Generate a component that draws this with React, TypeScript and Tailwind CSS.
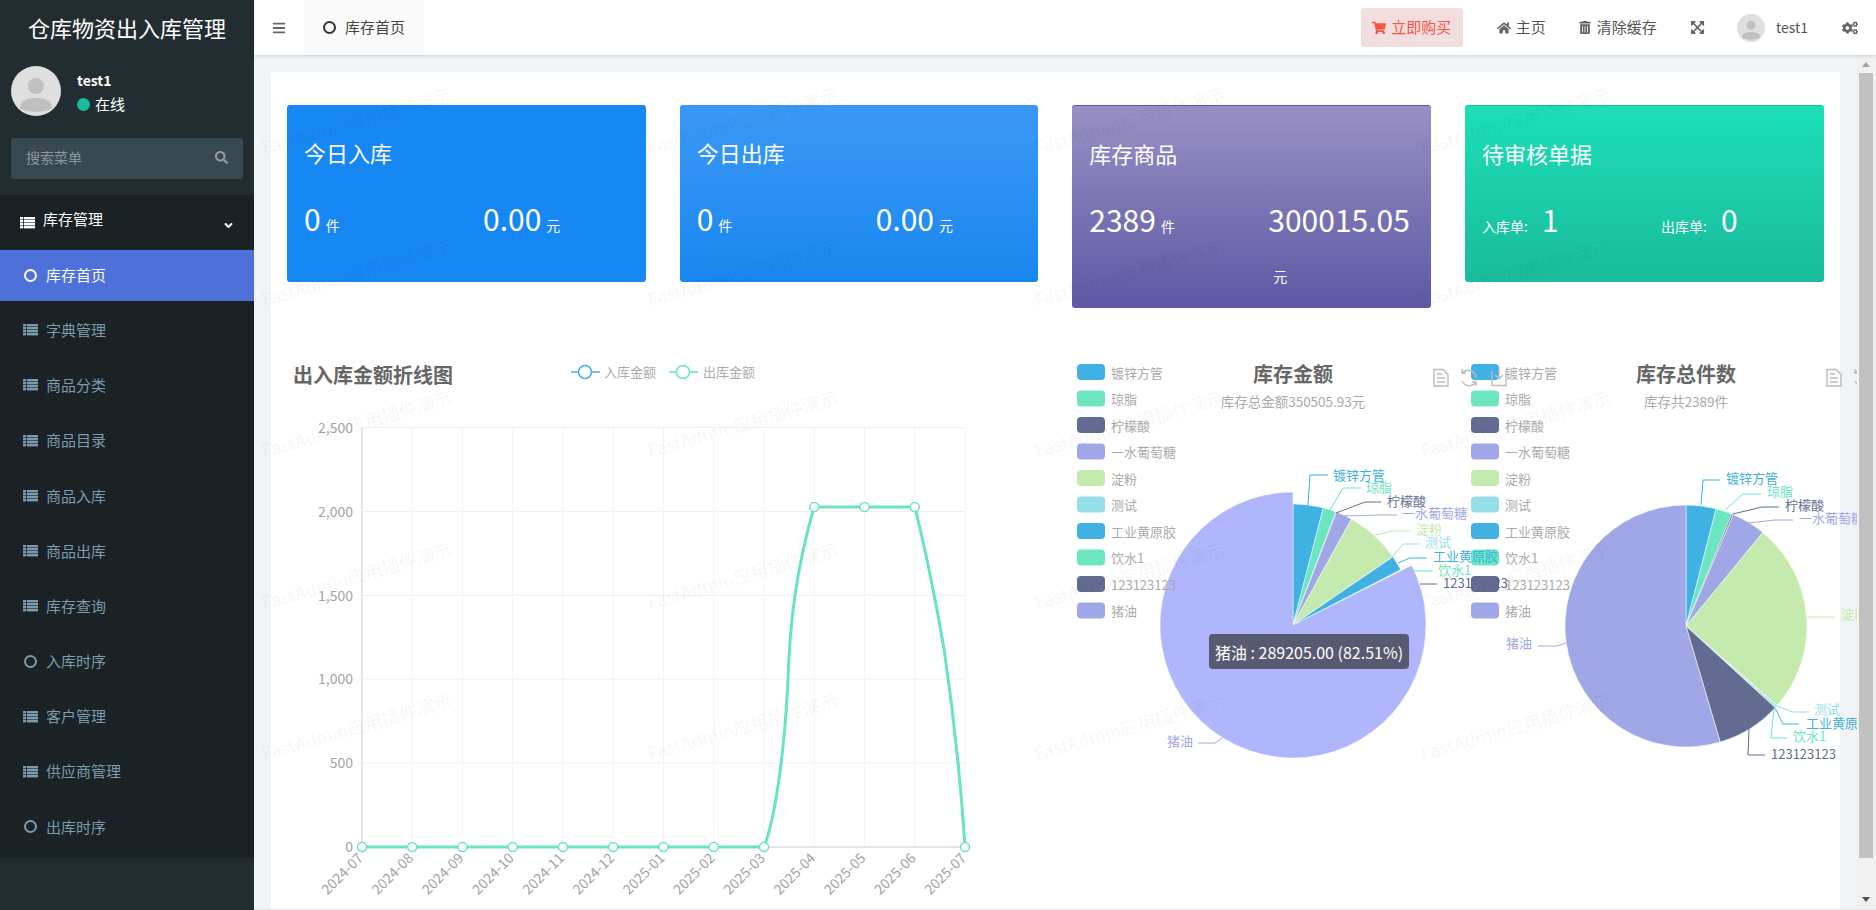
import React from 'react';
import { FaBars, FaCogs, FaExpandArrowsAlt, FaHome, FaSearch, FaShoppingCart, FaTrashAlt, FaAngleDown } from 'react-icons/fa';

const BLUE = '#3fb1e3';
const MINT = '#6be6c1';
const SLATE = '#626c91';
const LILAC = '#a0a7e6';
const LIME = '#c4ebad';
const AQUA = '#96dee8';

const menuItems = [
  { label: '字典管理', icon: 'list' },
  { label: '商品分类', icon: 'list' },
  { label: '商品目录', icon: 'list' },
  { label: '商品入库', icon: 'list' },
  { label: '商品出库', icon: 'list' },
  { label: '库存查询', icon: 'list' },
  { label: '入库时序', icon: 'ring' },
  { label: '客户管理', icon: 'list' },
  { label: '供应商管理', icon: 'list' },
  { label: '出库时序', icon: 'ring' },
];

const legendItems = [
  { name: '镀锌方管', color: BLUE, y: 371 },
  { name: '琼脂', color: MINT, y: 397.5 },
  { name: '柠檬酸', color: SLATE, y: 424 },
  { name: '一水葡萄糖', color: LILAC, y: 450.5 },
  { name: '淀粉', color: LIME, y: 477 },
  { name: '测试', color: AQUA, y: 503.5 },
  { name: '工业黄原胶', color: BLUE, y: 530 },
  { name: '饮水1', color: MINT, y: 556.5 },
  { name: '123123123', color: SLATE, y: 583 },
  { name: '猪油', color: LILAC, y: 609.5 },
];

type Slice = { from: number; to: number; color: string; r?: number };
type PieLabel = { text: string; color: string; line: string; x: number; y: number; end?: boolean };

const amountSlices: Slice[] = [
  { from: 0, to: 14.5, color: BLUE },
  { from: 14.5, to: 20.8, color: MINT },
  { from: 20.8, to: 21.1, color: SLATE },
  { from: 21.1, to: 28.9, color: LILAC },
  { from: 28.9, to: 55.6, color: LIME },
  { from: 55.6, to: 55.7, color: AQUA },
  { from: 55.7, to: 62.8, color: BLUE },
  { from: 63.3, to: 360, color: '#afb6fc', r: 133 },
];

const countSlices: Slice[] = [
  { from: 0, to: 14.4, color: BLUE },
  { from: 14.4, to: 22.2, color: MINT },
  { from: 22.2, to: 23, color: SLATE },
  { from: 23, to: 39.4, color: LILAC },
  { from: 39.4, to: 131.1, color: LIME },
  { from: 131.1, to: 131.5, color: AQUA },
  { from: 131.5, to: 132, color: BLUE },
  { from: 132, to: 132.5, color: MINT },
  { from: 132.5, to: 163.6, color: SLATE },
  { from: 163.6, to: 360, color: LILAC },
];

const amountLabels: PieLabel[] = [
  { text: '镀锌方管', color: BLUE, line: '1308,504 1310,474 1328,474', x: 1333, y: 473 },
  { text: '琼脂', color: MINT, line: '1330,509 1343,487 1361,487', x: 1366, y: 485.5 },
  { text: '柠檬酸', color: SLATE, line: '1336,512 1365,501 1381,501', x: 1387, y: 499.5 },
  { text: '一水葡萄糖', color: LILAC, line: '1343,515 1380,514 1397,514', x: 1402, y: 511.5 },
  { text: '淀粉', color: LIME, line: '1375,534 1393,530 1411,530', x: 1416, y: 527.5 },
  { text: '测试', color: AQUA, line: '1392,556 1403,543 1420,543', x: 1425, y: 540.5 },
  { text: '工业黄原胶', color: BLUE, line: '1398,562 1410,557 1427,557', x: 1433, y: 554.5 },
  { text: '饮水1', color: MINT, line: '1413,570 1433,570', x: 1438, y: 568.5 },
  { text: '123123123', color: SLATE, line: '1420,583 1437,583', x: 1443, y: 581 },
  { text: '猪油', color: LILAC, line: '1222,737 1215,742 1198,742', x: 1193, y: 739.5, end: true },
];

const countLabels: PieLabel[] = [
  { text: '镀锌方管', color: BLUE, line: '1701,504 1703,479 1720,479', x: 1726, y: 476.5 },
  { text: '琼脂', color: MINT, line: '1725,509 1743,493 1761,493', x: 1767, y: 489.5 },
  { text: '柠檬酸', color: SLATE, line: '1733,513 1762,506 1779,506', x: 1785, y: 503.5 },
  { text: '一水葡萄糖', color: LILAC, line: '1748,522 1775,519 1793,519', x: 1799, y: 516.5 },
  { text: '淀粉', color: LIME, line: '1807,616 1835,616', x: 1841, y: 612.5 },
  { text: '测试', color: AQUA, line: '1777,705 1793,711 1809,711', x: 1814, y: 707.5 },
  { text: '工业黄原胶', color: BLUE, line: '1775,707 1783,723 1799,723', x: 1806, y: 721.5 },
  { text: '饮水1', color: MINT, line: '1774,707 1771,737 1787,737', x: 1793, y: 734.5 },
  { text: '123123123', color: SLATE, line: '1749,728 1748,754 1765,754', x: 1771, y: 752 },
  { text: '猪油', color: LILAC, line: '1566,642 1557,645 1538,645', x: 1532, y: 641.5, end: true },
];

const months = ['2024-07', '2024-08', '2024-09', '2024-10', '2024-11', '2024-12', '2025-01', '2025-02', '2025-03', '2025-04', '2025-05', '2025-06', '2025-07'];
const chartLeft = 362;
const monthStep = 50.25;
const yTicks = [
  { label: '2,500', y: 426.5 },
  { label: '2,000', y: 510.5 },
  { label: '1,500', y: 594.5 },
  { label: '1,000', y: 678 },
  { label: '500', y: 762 },
  { label: '0', y: 846 },
];

function arcPath(cx: number, cy: number, r: number, from: number, to: number) {
  const rad = (d: number) => (d * Math.PI) / 180;
  const x0 = cx + r * Math.sin(rad(from));
  const y0 = cy - r * Math.cos(rad(from));
  const x1 = cx + r * Math.sin(rad(to));
  const y1 = cy - r * Math.cos(rad(to));
  const large = to - from > 180 ? 1 : 0;
  return `M${cx},${cy} L${x0},${y0} A${r},${r} 0 ${large} 1 ${x1},${y1} Z`;
}

function Ring({ className }: { className: string }) {
  return <span className={`inline-block h-[13px] w-[13px] shrink-0 rounded-full border-2 ${className}`} />;
}

// fa-list at this size reads as a striped block
function ListIcon({ className }: { className: string }) {
  return (
    <svg viewBox="0 0 15 12" className={`h-[12px] w-[15px] shrink-0 ${className}`} fill="currentColor">
      {[0, 3, 6, 9].map((y) => (
        <g key={y}>
          <rect x="0" y={y} width="3" height="2.4" />
          <rect x="3.8" y={y} width="11.2" height="2.4" />
        </g>
      ))}
    </svg>
  );
}

function Avatar({ size }: { size: string }) {
  return (
    <svg viewBox="0 0 50 50" className={`${size} shrink-0`}>
      <circle cx="25" cy="25" r="25" fill="#dfdfdf" />
      <circle cx="25" cy="20" r="8" fill="#c0c0c0" />
      <path d="M9 42 C9 34 17 32 25 32 C33 32 41 34 41 42 C36 47 14 47 9 42 Z" fill="#c0c0c0" />
    </svg>
  );
}

function Sidebar() {
  return (
    <aside className="flex h-full w-[254px] shrink-0 flex-col bg-[#222d32]">
      <div className="flex h-[55px] items-center justify-center pb-[1px] text-[22px] text-white">仓库物资出入库管理</div>
      <div className="flex px-[11px] pb-[22px] pt-[11px]">
        <Avatar size="h-[50px] w-[50px]" />
        <div className="ml-[16px] pt-[2px] text-white">
          <div className="h-[24px] text-[14px] font-bold leading-[24px]">test1</div>
          <div className="flex h-[24px] items-center text-[15px]">
            <span className="mr-[5px] h-[13px] w-[13px] rounded-full bg-[#18bc9c]" />
            在线
          </div>
        </div>
      </div>
      <div className="mx-[11px] flex h-[41px] items-center justify-between rounded-[3px] bg-[#374850] pb-[2px] pl-[15px] pr-[15px] text-[14px] text-[#8c979c]">
        <span>搜索菜单</span>
        <FaSearch className="h-[13px] w-[13px] text-[#999999]" />
      </div>
      <nav className="mt-[16px] bg-[#1a2226] pb-[5px]">
        <div className="flex h-[55px] items-center pl-[20px] pr-[19px] text-[15px] text-white">
          <ListIcon className="text-white" />
          <span className="ml-[8px] flex-1 pb-[6px]">库存管理</span>
          <FaAngleDown className="mt-[5px] h-[13px] w-[13px]" />
        </div>
        <div className="flex flex-col gap-[4.2px]">
          <a className="flex h-[51px] items-center bg-[#4e70d9] pb-[1px] pl-[24px] text-[15px] text-white">
            <Ring className="border-white" />
            <span className="ml-[9px]">库存首页</span>
          </a>
          {menuItems.map((item) => (
            <a key={item.label} className="flex h-[51px] items-center pb-[1px] pl-[23px] text-[15px] text-[#7b9cae]">
              {item.icon === 'list' ? (
                <ListIcon className="text-[#7b9cae]" />
              ) : (
                <span className="ml-[1px] mr-[1px] flex">
                  <Ring className="border-[#7b9cae]" />
                </span>
              )}
              <span className="ml-[8px]">{item.label}</span>
            </a>
          ))}
        </div>
      </nav>
    </aside>
  );
}

function Header() {
  return (
    <header className="relative z-10 flex h-[55px] shrink-0 items-center bg-white text-[15px] text-[#555555] shadow-[0_1px_3px_rgba(0,0,0,0.15)]">
      <FaBars className="ml-[18px] h-[14px] w-[14px] text-[#666666]" />
      <div className="ml-[18px] flex h-full w-[120px] items-center bg-[#f9f9f9] pl-[19px] text-[#444444]">
        <Ring className="border-[#333333]" />
        <span className="ml-[9px]">库存首页</span>
      </div>
      <a className="ml-auto flex h-[39px] w-[102px] items-center justify-center rounded-[3px] bg-[#f2dede] text-[#f75444]">
        <FaShoppingCart className="mr-[5px] h-[14px] w-[14px]" />
        立即购买
      </a>
      <FaHome className="ml-[34px] h-[14px] w-[14px] text-[#666666]" />
      <span className="ml-[5px]">主页</span>
      <FaTrashAlt className="ml-[33px] h-[13px] w-[12px] text-[#666666]" />
      <span className="ml-[6px]">清除缓存</span>
      <FaExpandArrowsAlt className="ml-[33px] h-[15px] w-[15px] text-[#666666]" />
      <span className="ml-[32px] flex">
        <Avatar size="h-[28px] w-[28px]" />
      </span>
      <span className="ml-[11px] text-[14px]">test1</span>
      <FaCogs className="ml-[34px] mr-[18px] h-[14px] w-[16px] text-[#666666]" />
    </header>
  );
}

function Stat({ value, unit, label }: { value: string; unit?: string; label?: string }) {
  return (
    <div className="flex flex-wrap items-baseline">
      {label && <span className="w-[60px] text-[14px]">{label}</span>}
      <span className="h-[56px] text-[30px] leading-[56px]">{value}</span>
      {unit && <span className="ml-[5px] mt-[19px] text-[14px] leading-[20px]">{unit}</span>}
    </div>
  );
}

function StatCard({ title, className, left, right }: { title: string; className: string; left: React.ReactNode; right: React.ReactNode }) {
  return (
    <div className={`min-h-[177px] w-[358.67px] shrink-0 rounded-[3px] px-[17px] pb-[22px] pt-[31px] text-white ${className}`}>
      <h3 className="h-[32px] text-[22px] leading-[32px]">{title}</h3>
      <div className="mt-[22px] grid grid-cols-[179px_1fr]">
        {left}
        {right}
      </div>
    </div>
  );
}

function LineChart() {
  return (
    <svg viewBox="287 350 789 560" className="h-[560px] w-[789px] shrink-0 overflow-visible">
      <text x="293" y="373" fontSize="20" fontWeight="700" fill="#666666" dominantBaseline="central">出入库金额折线图</text>
      <line x1="571" y1="371" x2="600" y2="371" stroke={BLUE} strokeWidth="1.5" />
      <circle cx="585" cy="371" r="6.5" fill="#ffffff" stroke={BLUE} strokeWidth="1.5" />
      <text x="604" y="370" fontSize="13" fill="#aaaaaa" dominantBaseline="central">入库金额</text>
      <line x1="669" y1="371" x2="698" y2="371" stroke={MINT} strokeWidth="1.5" />
      <circle cx="683" cy="371" r="6.5" fill="#ffffff" stroke={MINT} strokeWidth="1.5" />
      <text x="703" y="370" fontSize="13" fill="#aaaaaa" dominantBaseline="central">出库金额</text>

      {yTicks.slice(0, 5).map((t) => (
        <line key={t.label} x1={chartLeft} y1={t.y} x2="965" y2={t.y} stroke="#f0f0f0" />
      ))}
      {months.slice(1).map((m, i) => (
        <line key={m + i} x1={chartLeft + (i + 1) * monthStep} y1="427" x2={chartLeft + (i + 1) * monthStep} y2="846" stroke="#f3f3f3" />
      ))}
      <line x1={chartLeft} y1="427" x2={chartLeft} y2="846" stroke="#cccccc" />
      <line x1={chartLeft} y1="846" x2="965" y2="846" stroke="#cccccc" />
      {yTicks.map((t) => (
        <text key={t.label} x="353" y={t.y - 1} fontSize="14" fill="#a3a3a3" textAnchor="end" dominantBaseline="central">{t.label}</text>
      ))}
      {months.map((m, i) => {
        const x = chartLeft + i * monthStep + 2;
        return (
          <text key={m + i} x={x} y="858" fontSize="14" fill="#a3a3a3" textAnchor="end" transform={`rotate(-45 ${x} 858)`}>{m}</text>
        );
      })}
      <path
        d="M362,846 H764 C776,815 785,745 788,678 C790,620 796,570 814,506 H915 C925,548 936,600 944,648 C951,695 960,770 965,846"
        fill="none"
        stroke="#69e3c3"
        strokeWidth="3"
      />
      {months.map((m, i) => {
        const up = i >= 9 && i <= 11;
        return <circle key={m + i} cx={chartLeft + i * monthStep} cy={up ? 506 : 846} r="4.5" fill="#ffffff" stroke={MINT} strokeWidth="1.5" />;
      })}
    </svg>
  );
}

function ToolIcons({ x }: { x: number }) {
  return (
    <g fill="none" stroke="#bbbbbb" strokeWidth="1.4">
      <path d={`M${x},368.5 h9 l5,5 v11.5 h-14 z M${x + 3},373 h5 M${x + 3},377 h8 M${x + 3},381 h8`} />
      <path d={`M${x + 28},372 a8,8 0 0 1 14,5 M${x + 42},381 a8,8 0 0 1 -14,-1 M${x + 28},368 v4 h4 M${x + 42},385 v-4 h-4`} />
      <path d={`M${x + 58},370 v14.5 h14 v-14.5 M${x + 65},368 v10 M${x + 61},374 l4,4 l4,-4`} />
    </g>
  );
}

function PieChart({
  left,
  width,
  cx,
  cy,
  slices,
  labels,
  title,
  sub,
  titleX,
  toolX,
}: {
  left: number;
  width: number;
  cx: number;
  cy: number;
  slices: Slice[];
  labels: PieLabel[];
  title: string;
  sub: string;
  titleX: number;
  toolX: number;
}) {
  return (
    <svg viewBox={`${left} 350 ${width} 560`} style={{ width }} className="h-[560px] shrink-0 overflow-visible">
      <text x={titleX} y="372.5" fontSize="20" fontWeight="700" fill="#666666" textAnchor="middle" dominantBaseline="central">{title}</text>
      <text x={titleX} y="400" fontSize="13.5" fill="#aaaaaa" textAnchor="middle" dominantBaseline="central">{sub}</text>
      <ToolIcons x={toolX} />
      {slices.map((s) => (
        <path key={s.from} d={arcPath(cx, cy, s.r ?? 121, s.from, s.to)} fill={s.color} stroke="#ffffff" strokeWidth="0.5" />
      ))}
      {labels.map((l) => (
        <g key={l.text}>
          <polyline points={l.line} fill="none" stroke={l.color} />
          <text x={l.x} y={l.y} fontSize="13" fill={l.color} textAnchor={l.end ? 'end' : 'start'} dominantBaseline="central">{l.text}</text>
        </g>
      ))}
      {legendItems.map((item) => (
        <g key={item.name}>
          <rect x={left + 1} y={item.y - 8} width="28" height="16" rx="4" fill={item.color} />
          <text x={left + 35} y={item.y} fontSize="13" fill="#aaaaaa" dominantBaseline="central">{item.name}</text>
        </g>
      ))}
    </svg>
  );
}

function Watermark() {
  const cells = Array.from({ length: 20 }, (_, i) => i);
  return (
    <div className="pointer-events-none absolute left-[-91px] top-[-10px] z-20 grid grid-cols-[repeat(4,386.5px)] grid-rows-[repeat(5,151.5px)]">
      {cells.map((i) => (
        <div key={i} className="flex items-center justify-center">
          <span className="-rotate-[16deg] whitespace-nowrap text-[18px] text-black/[0.05]">FastAdmin应用插件演示</span>
        </div>
      ))}
    </div>
  );
}

export default function App() {
  return (
    <div className="flex h-[910px] w-[1876px] overflow-hidden font-['Noto_Sans_CJK_SC','Open_Sans',sans-serif]">
      <Sidebar />
      <div className="flex min-w-0 flex-1 flex-col">
        <Header />
        <div className="flex min-h-0 flex-1 border-b border-[#e6e6e6]">
          <main className="relative min-w-0 flex-1 overflow-hidden bg-[#f1f4f6] pl-[17px] pr-[17px] pt-[17px]">
            <div className="h-full w-[1569px] rounded-t-[3px] bg-white">
              <div className="flex items-start gap-[34px] px-[16px] pt-[33px]">
                <StatCard
                  title="今日入库"
                  className="bg-[#1787f3]"
                  left={<Stat value="0" unit="件" />}
                  right={<Stat value="0.00" unit="元" />}
                />
                <StatCard
                  title="今日出库"
                  className="bg-gradient-to-b from-[#3a98f5] to-[#1787f0]"
                  left={<Stat value="0" unit="件" />}
                  right={<Stat value="0.00" unit="元" />}
                />
                <StatCard
                  title="库存商品"
                  className="border-t border-[#5f58a6] bg-gradient-to-b from-[#9890c4] to-[#5e58a5]"
                  left={<Stat value="2389" unit="件" />}
                  right={<Stat value="300015.05" unit="元" />}
                />
                <StatCard
                  title="待审核单据"
                  className="border-t border-[#18bc9c] bg-gradient-to-b from-[#1cdfb7] to-[#19bb9b]"
                  left={<Stat label="入库单:" value="1" />}
                  right={<Stat label="出库单:" value="0" />}
                />
              </div>
              <div className="mt-[43px] flex pl-[16px]">
                <LineChart />
                <div className="relative shrink-0">
                  <PieChart
                    left={1076}
                    width={394}
                    cx={1293}
                    cy={624}
                    slices={amountSlices}
                    labels={amountLabels}
                    title="库存金额"
                    sub="库存总金额350505.93元"
                    titleX={1293}
                    toolX={1434}
                  />
                  <div className="absolute left-[133px] top-[283px] flex h-[35px] w-[200px] items-center justify-center whitespace-nowrap rounded-[4px] bg-[#585a72] text-[16px] text-white">
                    猪油 : 289205.00 (82.51%)
                  </div>
                </div>
                <PieChart
                  left={1470}
                  width={394}
                  cx={1686}
                  cy={625}
                  slices={countSlices}
                  labels={countLabels}
                  title="库存总件数"
                  sub="库存共2389件"
                  titleX={1686}
                  toolX={1827}
                />
              </div>
            </div>
            <Watermark />
          </main>
          <div className="flex w-[19px] shrink-0 flex-col bg-[#f1f1f1]">
            <div className="flex h-[18px] w-[17px] items-center justify-center">
              <span className="h-0 w-0 border-x-[4px] border-b-[5px] border-x-transparent border-b-[#a3a3a3]" />
            </div>
            <div className="ml-[2px] h-[785px] w-[14px] bg-[#c1c1c1]" />
            <div className="flex flex-1 items-end justify-center pb-[7px] pr-[2px]">
              <span className="h-0 w-0 border-x-[4px] border-t-[5px] border-x-transparent border-t-[#505050]" />
            </div>
          </div>
        </div>
      </div>
    </div>
  );
}
